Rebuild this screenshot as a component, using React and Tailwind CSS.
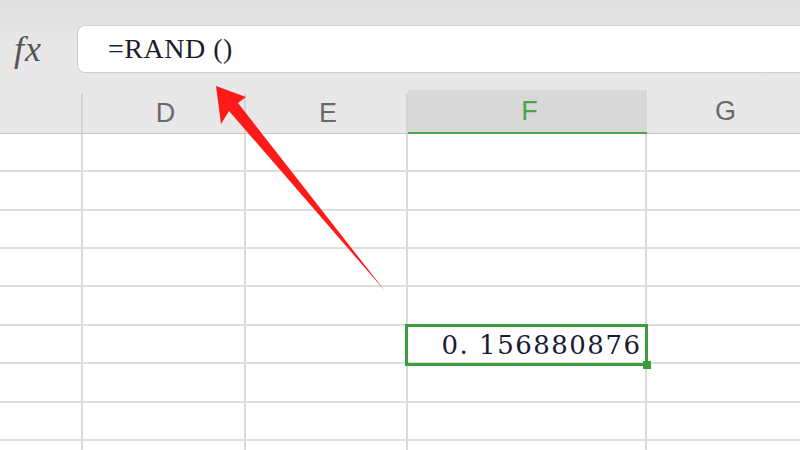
import React from 'react'

const cols = [
  { key: 'C', w: 'w-[83px]', label: '' },
  { key: 'D', w: 'w-[163px]', label: 'D' },
  { key: 'E', w: 'w-[162px]', label: 'E' },
  { key: 'F', w: 'w-[239px]', label: 'F' },
  { key: 'G', w: 'flex-1', label: 'G' },
]

const rowHeights = ['h-[38px]', 'h-[39px]', 'h-[38px]', 'h-[38px]', 'h-[39px]', 'h-[38px]', 'h-[39px]', 'h-[38px]', 'h-[38px]']

const serif = { fontFamily: '"Liberation Serif", "Times New Roman", serif' }
const wideSerif = { fontFamily: '"DejaVu Serif", "Liberation Serif", serif' }
const sans = { fontFamily: '"Liberation Sans", Arial, sans-serif' }

const App = () => {
  return (
    <div className="relative w-[800px] h-[450px] overflow-hidden bg-white">
      {/* Formula bar */}
      <div className="h-[90px] bg-gradient-to-b from-[#dedede] via-[#e8e8e8] to-[#e8e8e8] flex items-start pt-[25px]">
        <div className="w-[77px] h-[48px] flex items-center pl-[14px]">
          <span className="italic text-[36px] text-[#555] leading-none tracking-[1px]" style={serif}>fx</span>
        </div>
        <div className="flex-1 h-[48px] -mr-4 bg-white rounded-l-lg border-t border-b border-l border-[#cfcfcf] flex items-center pl-[30px]">
          <span className="text-[28px] text-[#1c1c2c] leading-none tracking-[0.5px]" style={serif}>=RAND ()</span>
        </div>
      </div>

      {/* Column headers */}
      <div className="h-[44px] bg-[#e8e8e8] border-b border-[#c9c9c9] flex">
        {cols.map((c) => (
          <div
            key={c.key}
            className={
              c.key === 'F'
                ? `${c.w} bg-[#d8d8d8] border-b-2 border-[#4aa84a] flex items-center justify-center -mb-px`
                : `${c.w} flex items-center justify-center ${c.key === 'G' ? '' : 'border-r-2 border-[#d4d4d4] mt-[3px]'}`
            }
          >
            <span
              className={`text-[27px] leading-none pl-[4px] ${c.key === 'F' ? 'text-[#46a646]' : 'text-[#6a6a6a]'}`}
              style={sans}
            >
              {c.label}
            </span>
          </div>
        ))}
      </div>

      {/* Grid */}
      <div className="flex flex-col">
        {rowHeights.map((h, r) => (
          <div key={r} className={`${h} flex border-b-2 border-[#dedede]`}>
            {cols.map((c, i) => (
              <div key={c.key} className={`${c.w} relative ${i < 4 ? 'border-r-2 border-[#dadada]' : ''}`}>
                {r === 5 && c.key === 'F' && (
                  <>
                    <div className="absolute z-10 -left-[3px] -top-[2px] -right-[3px] -bottom-[4px] border-[3px] border-[#3d9d3d] flex items-center justify-end pr-[5px]">
                      <span className="text-[26px] leading-none text-[#1a1a30] tracking-[1.5px] -mr-[1.5px]" style={wideSerif}>
                        0. 156880876
                      </span>
                    </div>
                    <div className="absolute z-10 -right-[6px] -bottom-[7px] w-[8px] h-[8px] bg-[#3d9d3d]"></div>
                  </>
                )}
              </div>
            ))}
          </div>
        ))}
      </div>

      {/* Red arrow annotation */}
      <svg className="absolute inset-0 z-20 pointer-events-none" width="800" height="450" viewBox="0 0 800 450">
        <polygon
          points="216,86 246,97 238,103 385,291 229,111 221,124"
          fill="#ff1a1a"
        />
      </svg>
    </div>
  )
}

export default App
